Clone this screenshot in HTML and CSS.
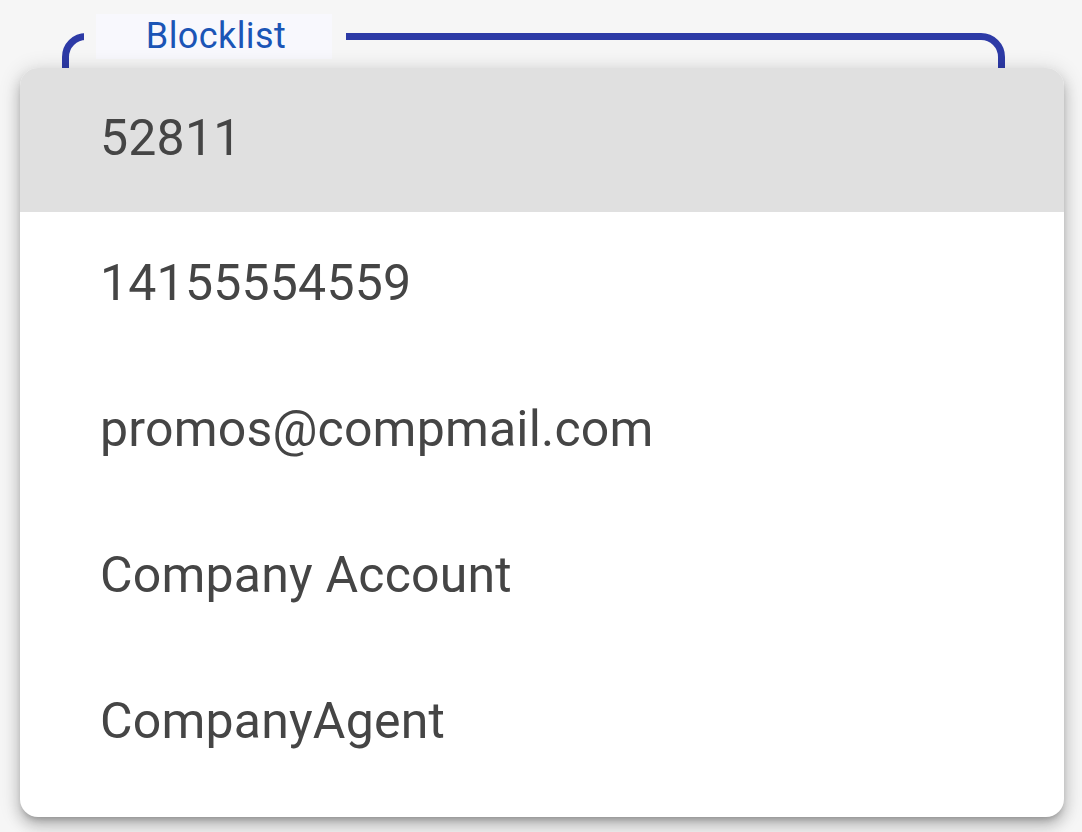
FILE: index.html
```html
<!DOCTYPE html>
<html>
<head>
<meta charset="utf-8">
<link rel="stylesheet" href="styles.css">
</head>
<body>
<div class="page">
  <div class="field">
    <div class="label-gap"><span class="label">Blocklist</span></div>
  </div>
  <ul class="menu">
    <li class="item selected">52811</li>
    <li class="item">14155554559</li>
    <li class="item">promos@compmail.com</li>
    <li class="item">Company Account</li>
    <li class="item">CompanyAgent</li>
  </ul>
</div>
</body>
</html>
```
FILE: styles.css
```css
html, body {
  margin: 0;
  padding: 0;
  width: 1082px;
  height: 832px;
  overflow: hidden;
  background: #f6f6f6;
  font-family: Roboto, "Liberation Sans", sans-serif;
}
.page {
  position: relative;
  width: 1082px;
  height: 832px;
  padding: 33px 0 0 62px;
  box-sizing: border-box;
}
.field {
  position: relative;
  width: 943px;
  height: 300px;
  box-sizing: border-box;
  border: 7px solid #2d3aa6;
  border-radius: 24px;
}
.label-gap {
  position: absolute;
  left: 15px;
  top: -20px;
  width: 262px;
  height: 30px;
  background: #f6f6f6;
}
.label {
  position: absolute;
  left: 12px;
  top: -6px;
  width: 236px;
  height: 45px;
  background: #f8f8fd;
  color: #1b55b6;
  font-size: 36px;
  line-height: 45px;
  text-align: center;
  letter-spacing: 0.4px;
  box-sizing: border-box;
  padding-left: 4px;
}
.menu {
  position: absolute;
  left: 20px;
  top: 68px;
  width: 1044px;
  height: 749px;
  margin: 0;
  padding: 0;
  list-style: none;
  background: #ffffff;
  border-radius: 18px;
  overflow: hidden;
  box-shadow: 0 5px 6px -3px rgba(0,0,0,0.25), 0 9px 14px 1px rgba(0,0,0,0.16), 0 3px 20px 3px rgba(0,0,0,0.12);
}
.item {
  height: 146px;
  display: flex;
  align-items: center;
  padding: 0 0 4px 80px;
  box-sizing: border-box;
  font-size: 50px;
  color: #454545;
  letter-spacing: 0.2px;
}
.item.selected {
  height: 144px;
  background: #e0e0e0;
}
```
